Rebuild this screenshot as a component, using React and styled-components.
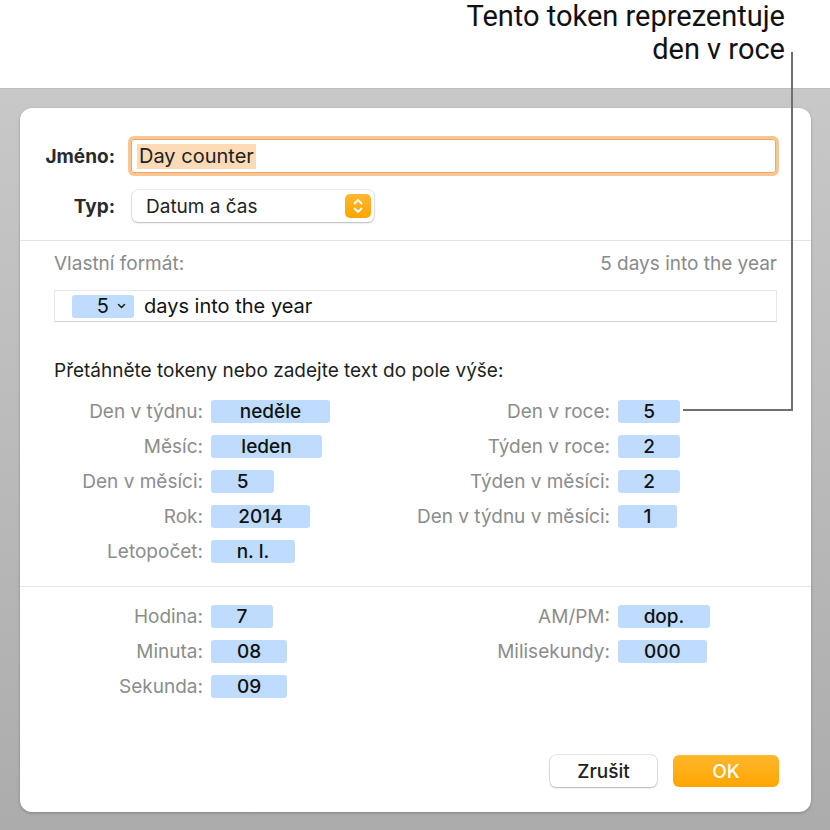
import React from "react";
import styled, { createGlobalStyle } from "styled-components";

const GlobalStyle = createGlobalStyle`
  html, body {
    margin: 0;
    padding: 0;
    background: #fff;
  }
  body {
    font-family: Inter, "Liberation Sans", sans-serif;
    -webkit-font-smoothing: antialiased;
  }
`;

const Page = styled.div`
  position: relative;
  width: 830px;
  height: 830px;
  display: flex;
  flex-direction: column;
  background: #fff;
  overflow: hidden;
`;

const Callout = styled.div`
  height: 88px;
  box-sizing: border-box;
  padding: 0 45px 0 0;
  text-align: right;
  font-family: Roboto, "Liberation Sans", sans-serif;
  font-size: 29px;
  line-height: 33px;
  color: #111;
`;

const Leader = styled.svg`
  position: absolute;
  left: 0;
  top: 0;
  pointer-events: none;
`;

const Backdrop = styled.div`
  flex: 1;
  display: flex;
  padding: 19px 19px 18px 20px;
  background: linear-gradient(#c8c8c8, #acacac);
  border-top: 1px solid #bdbdbd;
`;

const Dialog = styled.div`
  flex: 1;
  display: flex;
  flex-direction: column;
  background: #fff;
  border-radius: 12px;
  box-shadow: 0 1px 3px rgba(0, 0, 0, 0.25);
`;

const Header = styled.div`
  display: grid;
  grid-template-columns: 95px 1fr;
  column-gap: 13px;
  row-gap: 14px;
  align-items: center;
  padding: 28px 32px 18px 0;
`;

const FieldLabel = styled.div`
  text-align: right;
  font-size: 19px;
  font-weight: 700;
  color: #2a2a2a;
`;

const NameInput = styled.div`
  height: 40px;
  box-sizing: border-box;
  display: flex;
  align-items: center;
  padding-left: 6px;
  border: 3px solid #f9c592;
  border-radius: 6px;
  box-shadow: inset 0 0 0 1px #eda96a;
  font-size: 20px;
  color: #222;
`;

const Selected = styled.span`
  background: #fddbb6;
  padding: 0 2px;
  line-height: 25px;
`;

const Select = styled.div`
  width: 242px;
  height: 32px;
  margin-left: 4px;
  box-sizing: border-box;
  display: flex;
  align-items: center;
  justify-content: space-between;
  padding: 0 3px 0 14px;
  background: #fff;
  border-radius: 6px;
  box-shadow: 0 0 0 0.5px rgba(0, 0, 0, 0.15), 0 1px 2px rgba(0, 0, 0, 0.22);
  font-size: 19px;
  color: #222;
`;

const Stepper = styled.div`
  width: 26px;
  height: 24px;
  display: flex;
  align-items: center;
  justify-content: center;
  border-radius: 5px;
  background: linear-gradient(#ffb832, #ffa500);
`;

const Section = styled.div`
  border-top: 1px solid #e4e4e4;
  padding: ${(p) => p.$pad};
`;

const FormatHead = styled.div`
  display: flex;
  justify-content: space-between;
  font-size: 19px;
  line-height: 22px;
  color: #8a8a8a;
`;

const FormatField = styled.div`
  margin-top: 15px;
  height: 32px;
  box-sizing: border-box;
  display: flex;
  align-items: center;
  padding-left: 17px;
  border: 1px solid #e8e8e8;
  border-bottom-color: #d2d2d2;
  font-size: 20px;
  color: #111;
`;

const PickToken = styled.div`
  width: 62px;
  height: 23px;
  display: flex;
  align-items: center;
  justify-content: flex-end;
  gap: 8px;
  padding-right: 8px;
  box-sizing: border-box;
  margin-right: 10px;
  background: #bfdcff;
  border-radius: 3px;
`;

const Hint = styled.div`
  margin-top: 38px;
  font-size: 19px;
  line-height: 22px;
  color: #1e1e1e;
`;

const TokenGrid = styled.div`
  margin-top: ${(p) => p.$top || 0}px;
  display: grid;
  grid-template-columns: 149px 190px 201px auto;
  column-gap: 8px;
  grid-auto-rows: 35px;
  align-items: center;
`;

const Label = styled.div`
  text-align: right;
  font-size: 19px;
  color: #8c8c8c;
  white-space: nowrap;
`;

const Token = styled.div`
  width: ${(p) => p.$w}px;
  height: 23px;
  line-height: 23px;
  text-align: center;
  background: #bfdcff;
  border-radius: 3px;
  font-size: 19px;
  font-weight: 500;
  color: #111;
`;

const Buttons = styled.div`
  margin-top: auto;
  display: flex;
  justify-content: flex-end;
  gap: 16px;
  padding: 0 32px 25px 0;
`;

const Button = styled.div`
  width: ${(p) => p.$w}px;
  height: 32px;
  display: flex;
  align-items: center;
  justify-content: center;
  border-radius: 6px;
  font-size: 19px;
  font-weight: 500;
  color: ${(p) => (p.$primary ? "#fff" : "#222")};
  background: ${(p) =>
    p.$primary ? "linear-gradient(#ffb72c, #ffa500)" : "#fff"};
  box-shadow: ${(p) =>
    p.$primary
      ? "none"
      : "0 0 0 0.5px rgba(0,0,0,0.18), 0 1px 2px rgba(0,0,0,0.22)"};
`;

const dateRows = [
  ["Den v týdnu:", "neděle", 119, "Den v roce:", "5", 62],
  ["Měsíc:", "leden", 111, "Týden v roce:", "2", 62],
  ["Den v měsíci:", "5", 63, "Týden v měsíci:", "2", 62],
  ["Rok:", "2014", 99, "Den v týdnu v měsíci:", "1", 59],
  ["Letopočet:", "n. l.", 84],
];

const timeRows = [
  ["Hodina:", "7", 62, "AM/PM:", "dop.", 92],
  ["Minuta:", "08", 76, "Milisekundy:", "000", 89],
  ["Sekunda:", "09", 76],
];

const Rows = ({ rows }) =>
  rows.map((r) => (
    <React.Fragment key={r[0]}>
      <Label>{r[0]}</Label>
      <div>
        <Token $w={r[2]}>{r[1]}</Token>
      </div>
      {r[3] && <Label>{r[3]}</Label>}
      {r[3] && <Token $w={r[5]}>{r[4]}</Token>}
    </React.Fragment>
  ));

export default function App() {
  return (
    <Page>
      <GlobalStyle />
      <Callout>
        Tento token reprezentuje
        <br />
        den v roce
      </Callout>
      <Backdrop>
        <Dialog>
          <Header>
            <FieldLabel>Jméno:</FieldLabel>
            <NameInput>
              <Selected>Day counter</Selected>
            </NameInput>
            <FieldLabel>Typ:</FieldLabel>
            <Select>
              Datum a čas
              <Stepper>
                <svg width="12" height="18" viewBox="0 0 12 18">
                  <path
                    d="M2.5 6.5 6 3l3.5 3.5M2.5 11.5 6 15l3.5-3.5"
                    fill="none"
                    stroke="#fff"
                    strokeWidth="1.8"
                    strokeLinecap="round"
                    strokeLinejoin="round"
                  />
                </svg>
              </Stepper>
            </Select>
          </Header>

          <Section $pad="12px 34px 17.5px 34px">
            <FormatHead>
              <span>Vlastní formát:</span>
              <span>5 days into the year</span>
            </FormatHead>
            <FormatField>
              <PickToken>
                5
                <svg width="9" height="6" viewBox="0 0 9 6">
                  <path
                    d="M1.5 1.5 4.5 4.5 7.5 1.5"
                    fill="none"
                    stroke="#222"
                    strokeWidth="1.6"
                    strokeLinecap="round"
                    strokeLinejoin="round"
                  />
                </svg>
              </PickToken>
              days into the year
            </FormatField>
            <Hint>Přetáhněte tokeny nebo zadejte text do pole výše:</Hint>
            <TokenGrid $top={11.5}>
              <Rows rows={dateRows} />
            </TokenGrid>
          </Section>

          <Section $pad="11.5px 34px 0 34px">
            <TokenGrid>
              <Rows rows={timeRows} />
            </TokenGrid>
          </Section>

          <Buttons>
            <Button $w={107}>Zrušit</Button>
            <Button $w={106} $primary>
              OK
            </Button>
          </Buttons>
        </Dialog>
      </Backdrop>

      <Leader width="830" height="830">
        <polyline
          points="792,52 792,410 683,410"
          fill="none"
          stroke="#6f6f6f"
          strokeWidth="2"
        />
      </Leader>
    </Page>
  );
}
